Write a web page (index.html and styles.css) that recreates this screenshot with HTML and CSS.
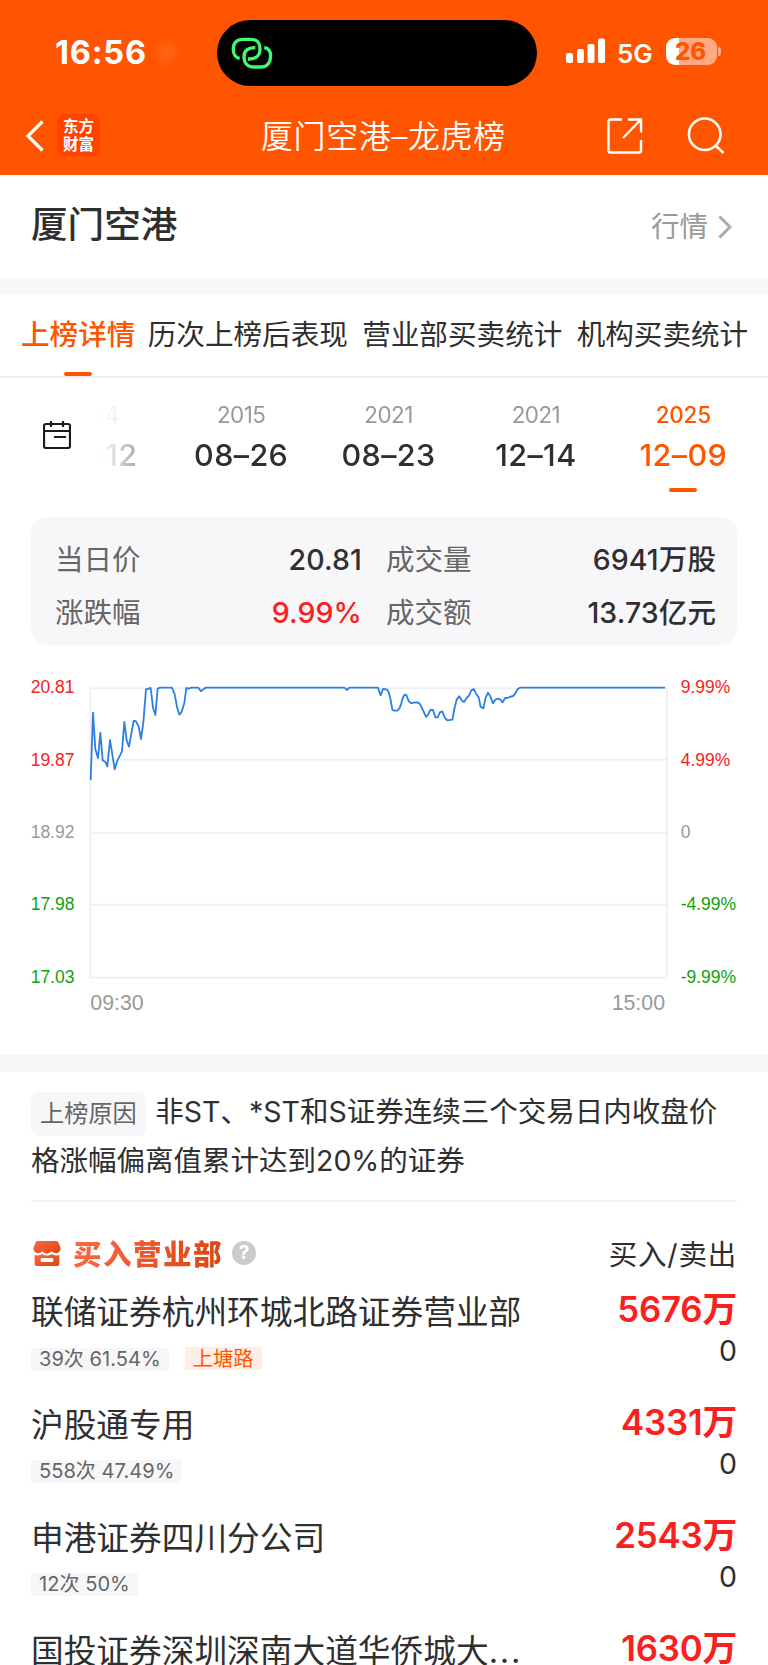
FILE: index.html
```
<!DOCTYPE html>
<html lang="zh-CN">
<head>
    <meta charset="UTF-8">
    <title>厦门空港-龙虎榜</title>
    <link rel="stylesheet" href="styles.css">
</head>
<body>
    <header class="header">
        <div class="status-bar">
            <div class="time">16:56<span class="glow"></span></div>
            <div class="island">
                <svg width="42" height="34" viewBox="0 0 126 102" fill="none" stroke="#3dfb73" stroke-width="10">
                    <path d="M26 67C14 65 7 54 7 42V38C7 20 19 10 35 10H61C78 10 87 21 87 38C87 58 75 69 56 69H51"/>
                    <path d="M100 34C112 37 119 46 119 59C119 78 109 93 91 93H68C49 93 39 80 39 62C39 45 51 35 73 35"/>
                </svg>
            </div>
            <div class="status-right">
                <svg width="40" height="26" viewBox="0 0 40 26" fill="#fff">
                    <rect x="0" y="15" width="7" height="10" rx="2"/>
                    <rect x="11" y="11" width="7" height="14" rx="2"/>
                    <rect x="21.500" y="6" width="7" height="19" rx="2"/>
                    <rect x="32" y="0.500" width="7" height="24.500" rx="2"/>
                </svg>
                <span class="network">5G</span>
                <div class="battery">26</div>
                <div class="battery-tip"></div>
            </div>
        </div>
        <nav class="nav">
            <svg class="back" width="20" height="32" viewBox="0 0 20 32" fill="none" stroke="#fff" stroke-width="3.200">
                <path d="M17.500 1.500L3 16L17.500 30.500"/>
            </svg>
            <div class="logo">东方<br>财富</div>
            <h1>厦门空港–龙虎榜</h1>
            <svg class="share" width="36" height="36" viewBox="0 0 36 36" fill="none" stroke="#fff" stroke-width="2.400">
                <path d="M15 1.500H3.500Q1.500 1.500 1.500 3.500V32.500Q1.500 34.500 3.500 34.500H32Q34 34.500 34 32.500V22"/>
                <path d="M21 1.500H34V14.500M34 1.500L16 20"/>
            </svg>
            <svg class="search" width="38" height="38" viewBox="0 0 38 38" fill="none" stroke="#fff" stroke-width="2.500">
                <circle cx="17.700" cy="17.200" r="15.800"/>
                <path d="M28.500 28.500L36.500 36"/>
            </svg>
        </nav>
    </header>

    <section class="stock">
        <h2>厦门空港</h2>
        <a class="quote">行情
            <svg width="14" height="24" viewBox="0 0 14 24" fill="none" stroke="#aaa" stroke-width="3">
                <path d="M1.500 1.500L12 12L1.500 22.500"/>
            </svg>
        </a>
    </section>

    <div class="tabs">
        <div class="tab active">上榜详情</div>
        <div class="tab">历次上榜后表现</div>
        <div class="tab">营业部买卖统计</div>
        <div class="tab">机构买卖统计</div>
    </div>

    <div class="dates">
        <svg class="calendar" width="28" height="28" viewBox="0 0 28 28" fill="none" stroke="#1c1c1c" stroke-width="2.200">
            <rect x="1" y="3" width="26" height="24" rx="2"/>
            <path d="M1 10H27M8 0V6M20 0V6M11 16H23"/>
        </svg>
        <div class="date-scroll">
            <div class="date-item"><span class="year">2014</span><span class="day">09–12</span></div>
            <div class="date-item"><span class="year">2015</span><span class="day">08–26</span></div>
            <div class="date-item"><span class="year">2021</span><span class="day">08–23</span></div>
            <div class="date-item"><span class="year">2021</span><span class="day">12–14</span></div>
            <div class="date-item active"><span class="year">2025</span><span class="day">12–09</span></div>
        </div>
    </div>

    <div class="summary">
        <span class="label">当日价</span><span class="value">20.81</span>
        <span class="label">成交量</span><span class="value">6941万股</span>
        <span class="label">涨跌幅</span><span class="value up">9.99%</span>
        <span class="label">成交额</span><span class="value">13.73亿元</span>
    </div>

    <svg class="chart" width="768" height="360" viewBox="0 0 2304 1080">
        <path class="grid" d="M271 85H2001V953H271ZM271 299H2001M271 519H2001M271 734H2001"/>
        <polyline class="price" points="272,360 279,158 286,268 294,294 301,218 308,301 316,306 322,319 330,240 337,283 344,328 352,302 366,274 373,186 380,241 387,260 401,182 408,184 416,200 423,237 430,187 438,88 452,84 459,143 466,165 473,86 481,83 516,83 524,103 531,140 538,164 545,155 553,129 559,84 567,86 574,83 595,83 603,94 611,87 618,83 1033,83 1041,90 1048,83 1134,83 1142,106 1149,87 1160,88 1165,94 1171,115 1177,149 1182,152 1192,152 1198,146 1204,130 1209,112 1214,104 1219,105 1226,123 1234,130 1240,128 1250,127 1257,129 1263,138 1272,157 1278,171 1284,164 1291,150 1299,150 1306,172 1313,172 1320,157 1327,154 1335,174 1342,181 1357,179 1363,147 1370,119 1378,109 1385,121 1392,126 1400,114 1407,107 1414,91 1421,87 1428,101 1436,112 1442,141 1450,145 1457,113 1464,98 1471,109 1479,130 1487,118 1493,116 1501,119 1508,127 1515,114 1522,114 1529,111 1539,108 1545,102 1552,88 1560,83 1995,83"/>
        <g class="axis">
            <text class="up" x="92" y="99">20.81</text>
            <text class="up" x="92" y="317">19.87</text>
            <text x="92" y="534">18.92</text>
            <text class="down" x="92" y="751">17.98</text>
            <text class="down" x="92" y="968">17.03</text>
            <text class="up" x="2042" y="99">9.99%</text>
            <text class="up" x="2042" y="317">4.99%</text>
            <text x="2042" y="534">0</text>
            <text class="down" x="2042" y="751">-4.99%</text>
            <text class="down" x="2042" y="968">-9.99%</text>
        </g>
        <g class="hours">
            <text x="271" y="1049">09:30</text>
            <text x="1995" y="1049" text-anchor="end">15:00</text>
        </g>
    </svg>

    <section class="reason">
        <p><span class="reason-tag">上榜原因</span>非ST、*ST和S证券连续三个交易日内收盘价格涨幅偏离值累计达到20%的证券</p>
    </section>

    <section class="buyers">
        <div class="buyers-head">
            <svg width="28" height="25" viewBox="0 0 84 75">
                <defs>
                    <linearGradient id="shop" x1="0" y1="0" x2="1" y2="1">
                        <stop offset="0" stop-color="#fb6a45"/>
                        <stop offset="1" stop-color="#dc4410"/>
                    </linearGradient>
                </defs>
                <path fill="url(#shop)" d="M14 0H69Q75 0 77 5L83 22Q82 36 70 37Q62 37 56 31Q49 38 42 38Q35 38 28 31Q22 37 14 37Q2 36 1 22L7 5Q9 0 14 0Z"/>
                <path fill="url(#shop)" fill-rule="evenodd" d="M5 42Q18 46 28 39Q42 48 56 39Q66 46 79 42V69Q79 75 73 75H11Q5 75 5 69ZM27 51Q23 51 23 55V59Q23 63 27 63H57Q61 63 61 59V55Q61 51 57 51Z"/>
            </svg>
            <h3>买入营业部</h3>
            <span class="help">?</span>
            <span class="columns">买入/卖出</span>
        </div>

        <div class="row">
            <div class="broker">
                <div class="name">联储证券杭州环城北路证券营业部</div>
                <span class="tag">39次 61.54%</span><span class="tag hot">上塘路</span>
            </div>
            <div class="amount"><b>5676万</b><span>0</span></div>
        </div>
        <div class="row">
            <div class="broker">
                <div class="name">沪股通专用</div>
                <span class="tag">558次 47.49%</span>
            </div>
            <div class="amount"><b>4331万</b><span>0</span></div>
        </div>
        <div class="row">
            <div class="broker">
                <div class="name">申港证券四川分公司</div>
                <span class="tag">12次 50%</span>
            </div>
            <div class="amount"><b>2543万</b><span>0</span></div>
        </div>
        <div class="row">
            <div class="broker">
                <div class="name">国投证券深圳深南大道华侨城大<span class="dots">...</span></div>
            </div>
            <div class="amount"><b>1630万</b></div>
        </div>
    </section>
</body>
</html>
```
FILE: styles.css
```
* {
    margin: 0;
    padding: 0;
    box-sizing: border-box;
}

body {
    width: 768px;
    height: 1665px;
    overflow: hidden;
    background: #fff;
    color: #2f2f2f;
    font-family: Inter, "Noto Sans CJK SC", sans-serif;
    font-size: 28.5px;
}

svg {
    display: block;
    flex: none;
}

/* header */
.header {
    height: 175px;
    background: #ff5500;
    color: #fff;
}

.status-bar {
    display: grid;
    grid-template-columns: 217px 320px 1fr;
    height: 106px;
    padding-top: 20px;
}

.time {
    display: flex;
    align-items: center;
    height: 65px;
    padding-left: 55px;
    font-size: 32.5px;
    font-weight: 700;
    letter-spacing: 0.8px;
}

.glow {
    width: 30px;
    height: 30px;
    margin-left: 4px;
    background: radial-gradient(closest-side, #ff681c, #ff5500);
}

.island {
    height: 66px;
    padding: 16px 0 0 14px;
    background: #000;
    border-radius: 33px;
}

.status-right {
    display: flex;
    align-items: center;
    height: 62px;
    padding-left: 29px;
}

.network {
    width: 48px;
    padding: 4px 0 0 11px;
    font-size: 26px;
    font-weight: 600;
}

.battery {
    width: 51px;
    height: 27px;
    margin-left: 12px;
    padding-left: 9px;
    border-radius: 9px;
    background: linear-gradient(90deg, #fff 13px, #ffaa80 13px);
    color: #ff5500;
    font-size: 24px;
    font-weight: 800;
    line-height: 28px;
}

.battery-tip {
    width: 3px;
    height: 9px;
    margin-left: 1px;
    border-radius: 0 3px 3px 0;
    background: #ffaa80;
}

.nav {
    display: flex;
    align-items: center;
    height: 60px;
    padding-left: 25px;
}

.logo {
    width: 43px;
    height: 42px;
    margin: -2px 0 0 12px;
    padding-top: 4px;
    border-radius: 8px;
    background: #ff4200;
    font-size: 15.5px;
    font-weight: 700;
    line-height: 17.5px;
    text-align: center;
}

.nav h1 {
    width: 244px;
    margin: -4px 0 0 161px;
    font-size: 32px;
    font-weight: 350;
    letter-spacing: 0.6px;
    white-space: nowrap;
}

.share {
    margin-left: 102px;
}

.search {
    margin-left: 44px;
}

/* stock name */
.stock {
    display: flex;
    justify-content: space-between;
    height: 119px;
    padding: 0 36px 0 31px;
    border-bottom: 16px solid #f7f7fa;
    line-height: 101px;
}

.stock h2 {
    font-size: 36.6px;
    font-weight: 500;
}

.quote {
    display: flex;
    align-items: center;
    gap: 10px;
    color: #999;
}

/* tabs */
.tabs {
    display: flex;
    gap: 14.300px;
    height: 84px;
    padding-left: 21px;
    border-bottom: 2px solid #ededed;
    line-height: 82px;
}

.tab {
    position: relative;
    font-size: 28.6px;
    white-space: nowrap;
}

.tab.active {
    margin-right: -2px;
    color: #ff5500;
    font-weight: 500;
}

.tab.active::after,
.date-item.active::after {
    content: '';
    position: absolute;
    left: 50%;
    bottom: 0;
    width: 28px;
    height: 4px;
    margin-left: -14px;
    border-radius: 2px;
    background: #ff5500;
}

/* dates */
.dates {
    display: flex;
    height: 139px;
    padding: 19px 0 0 43px;
}

.calendar {
    margin-top: 24px;
}

.date-scroll {
    display: flex;
    justify-content: flex-end;
    width: 657px;
    height: 95px;
    margin-left: 29px;
    overflow: hidden;
    -webkit-mask-image: linear-gradient(90deg, transparent, #000 90px);
    mask-image: linear-gradient(90deg, transparent, #000 90px);
}

.date-item {
    position: relative;
    display: flex;
    flex: none;
    flex-direction: column;
    align-items: center;
    width: 147.400px;
}

.year {
    color: #999;
    font-size: 22.4px;
    line-height: 35px;
    letter-spacing: -0.5px;
}

.day {
    font-size: 30.5px;
    font-weight: 500;
    line-height: 45px;
    letter-spacing: 0.4px;
}

.date-item.active,
.date-item.active .year {
    color: #ff5500;
}

.date-item.active .year {
    font-weight: 500;
    letter-spacing: -0.2px;
}

/* summary card */
.summary {
    display: grid;
    grid-template-columns: 110px 197px 110px 1fr;
    align-content: start;
    height: 128px;
    margin: 0 31px;
    padding: 17px 21px 0 24px;
    border-radius: 16px;
    background: #f7f7fa;
    line-height: 52.500px;
}

.label {
    color: #666;
    white-space: nowrap;
}

.label:nth-of-type(4n + 3) {
    padding-left: 24px;
}

.value {
    text-align: right;
    font-weight: 500;
    letter-spacing: 0.1px;
    white-space: nowrap;
}

.value.up {
    color: #fa2020;
}

/* chart */
.chart {
    margin-top: 15px;
}

.grid {
    fill: none;
    stroke: #efefef;
    stroke-width: 5;
}

.price {
    fill: none;
    stroke: #2f80e4;
    stroke-width: 5.500;
    stroke-linejoin: round;
}

.axis,
.hours {
    fill: #999;
    font-family: "Liberation Sans", sans-serif;
    font-size: 52.5px;
}

.axis .up {
    fill: #fa2020;
}

.axis .down {
    fill: #0ba50b;
}

.hours {
    font-size: 64px;
}

/* reason */
.reason {
    margin-top: 35px;
    padding: 16px 31px 0;
    border-top: 17px solid #f7f7fa;
    line-height: 48.500px;
}

.reason p {
    height: 114px;
    border-bottom: 2px solid #f4f4f4;
}

.reason-tag {
    display: inline-block;
    height: 44px;
    margin-right: 9.500px;
    padding: 0 9px;
    border-radius: 8px;
    background: #f7f7fa;
    color: #666;
    font-size: 24.2px;
    line-height: 44px;
}

/* buyers */
.buyers {
    padding: 0 31px;
}

.buyers-head {
    display: flex;
    align-items: center;
    height: 68px;
    margin-top: 17px;
    padding-left: 2px;
}

.buyers-head h3 {
    margin: -2px 0 0 12px;
    background: linear-gradient(100deg, #fb6a45, #dc4410);
    -webkit-background-clip: text;
    background-clip: text;
    color: transparent;
    font-size: 28.5px;
    font-weight: 900;
    letter-spacing: 1.5px;
}

.help {
    width: 24px;
    height: 24px;
    margin-left: 9px;
    border-radius: 50%;
    background: #ccc;
    color: #fff;
    font-size: 19px;
    font-weight: 700;
    line-height: 24px;
    text-align: center;
}

.columns {
    margin: -2px 0 0 auto;
    letter-spacing: 0.8px;
}

.row {
    display: flex;
    justify-content: space-between;
    height: 113px;
}

.broker {
    padding-top: 2px;
    font-size: 0;
}

.name {
    height: 58px;
    font-size: 32.7px;
    line-height: 47px;
    white-space: nowrap;
}

.dots {
    letter-spacing: 1.8px;
}

.tag {
    display: inline-block;
    height: 23px;
    margin-right: 16px;
    padding: 0 8px;
    background: #f7f7fa;
    color: #666;
    font-size: 20.1px;
    line-height: 23px;
}

.tag.hot {
    background: #ffede6;
    color: #ff5500;
    font-size: 20.3px;
}

.amount {
    display: flex;
    flex-direction: column;
    text-align: right;
    line-height: 40px;
}

.amount b {
    color: #fa2020;
    font-size: 34.8px;
    font-weight: 600;
    line-height: 44px;
    letter-spacing: -0.2px;
}
```
